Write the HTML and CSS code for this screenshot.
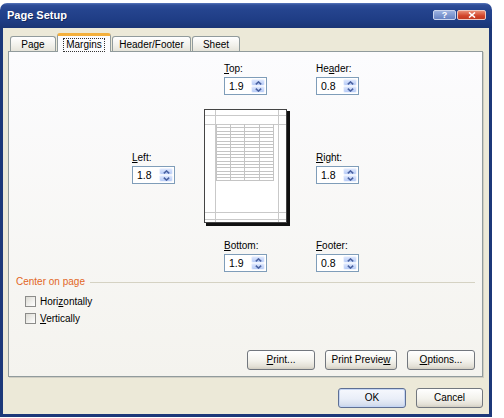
FILE: index.html
```html
<!DOCTYPE html>
<html>
<head>
<meta charset="utf-8">
<title>Page Setup</title>
<link rel="stylesheet" href="styles.css">
</head>
<body>
<div class="window">
  <div class="titlebar">
    <span class="title">Page Setup</span>
    <div class="tb-buttons">
      <span class="tb-btn help">?</span>
      <span class="tb-btn close"><svg width="8" height="6" viewBox="0 0 8 6"><path d="M1 0.5L7 5.5M7 0.5L1 5.5" stroke="#fff" stroke-width="1.6" fill="none"/></svg></span>
    </div>
  </div>
  <div class="frame">
    <div class="tabs">
      <div class="tab w-page">Page</div>
      <div class="tab active w-margins"><span class="focus">Margins</span></div>
      <div class="tab w-hf">Header/Footer</div>
      <div class="tab w-sheet">Sheet</div>
    </div>
    <div class="pane">
      <div class="mgrid">
        <div class="field f-top">
          <div class="lbl"><u>T</u>op:</div>
          <div class="spin"><span class="val">1.9</span><span class="arrows"><span class="arr"><svg width="7" height="4" viewBox="0 0 7 4"><path d="M0.8 3.4L3.5 0.9L6.2 3.4" stroke="#4A62A2" stroke-width="1.5" fill="none"/></svg></span><span class="arr"><svg width="7" height="4" viewBox="0 0 7 4"><path d="M0.8 0.6L3.5 3.1L6.2 0.6" stroke="#4A62A2" stroke-width="1.5" fill="none"/></svg></span></span></div>
        </div>
        <div class="field f-header">
          <div class="lbl">He<u>a</u>der:</div>
          <div class="spin"><span class="val">0.8</span><span class="arrows"><span class="arr"><svg width="7" height="4" viewBox="0 0 7 4"><path d="M0.8 3.4L3.5 0.9L6.2 3.4" stroke="#4A62A2" stroke-width="1.5" fill="none"/></svg></span><span class="arr"><svg width="7" height="4" viewBox="0 0 7 4"><path d="M0.8 0.6L3.5 3.1L6.2 0.6" stroke="#4A62A2" stroke-width="1.5" fill="none"/></svg></span></span></div>
        </div>
        <div class="field f-left">
          <div class="lbl"><u>L</u>eft:</div>
          <div class="spin"><span class="val">1.8</span><span class="arrows"><span class="arr"><svg width="7" height="4" viewBox="0 0 7 4"><path d="M0.8 3.4L3.5 0.9L6.2 3.4" stroke="#4A62A2" stroke-width="1.5" fill="none"/></svg></span><span class="arr"><svg width="7" height="4" viewBox="0 0 7 4"><path d="M0.8 0.6L3.5 3.1L6.2 0.6" stroke="#4A62A2" stroke-width="1.5" fill="none"/></svg></span></span></div>
        </div>
        <div class="preview">
          <svg width="86" height="117" viewBox="0 0 86 117" shape-rendering="crispEdges">
            <rect x="2" y="2" width="84" height="115" fill="#111"/>
            <rect x="0.5" y="0.5" width="82" height="113" fill="#fff" stroke="#444"/>
            <path d="M1 6.5H82M1 15.5H82M1 103.5H82M1 110.5H82M11.5 1V113M74.5 1V113" stroke="#C9C9C9" fill="none"/>
            <path d="M12 18.5H69M12 22.5H69M12 25.5H69M12 28.5H69M12 32.5H69M12 35.5H69M12 38.5H69M12 42.5H69M12 45.5H69M12 48.5H69M12 52.5H69M12 55.5H69M12 58.5H69M12 62.5H69M12 65.5H69M12 68.5H69M12 71.5H69M12.5 15V72M26.5 15V72M40.5 15V72M55.5 15V72M69.5 15V72" stroke="#C4C4C4" fill="none"/>
          </svg>
        </div>
        <div class="field f-right">
          <div class="lbl"><u>R</u>ight:</div>
          <div class="spin"><span class="val">1.8</span><span class="arrows"><span class="arr"><svg width="7" height="4" viewBox="0 0 7 4"><path d="M0.8 3.4L3.5 0.9L6.2 3.4" stroke="#4A62A2" stroke-width="1.5" fill="none"/></svg></span><span class="arr"><svg width="7" height="4" viewBox="0 0 7 4"><path d="M0.8 0.6L3.5 3.1L6.2 0.6" stroke="#4A62A2" stroke-width="1.5" fill="none"/></svg></span></span></div>
        </div>
        <div class="field f-bottom">
          <div class="lbl"><u>B</u>ottom:</div>
          <div class="spin"><span class="val">1.9</span><span class="arrows"><span class="arr"><svg width="7" height="4" viewBox="0 0 7 4"><path d="M0.8 3.4L3.5 0.9L6.2 3.4" stroke="#4A62A2" stroke-width="1.5" fill="none"/></svg></span><span class="arr"><svg width="7" height="4" viewBox="0 0 7 4"><path d="M0.8 0.6L3.5 3.1L6.2 0.6" stroke="#4A62A2" stroke-width="1.5" fill="none"/></svg></span></span></div>
        </div>
        <div class="field f-footer">
          <div class="lbl"><u>F</u>ooter:</div>
          <div class="spin"><span class="val">0.8</span><span class="arrows"><span class="arr"><svg width="7" height="4" viewBox="0 0 7 4"><path d="M0.8 3.4L3.5 0.9L6.2 3.4" stroke="#4A62A2" stroke-width="1.5" fill="none"/></svg></span><span class="arr"><svg width="7" height="4" viewBox="0 0 7 4"><path d="M0.8 0.6L3.5 3.1L6.2 0.6" stroke="#4A62A2" stroke-width="1.5" fill="none"/></svg></span></span></div>
        </div>
      </div>
      <div class="group-title"><span class="gt-text">Center on page</span><span class="gt-rule"></span></div>
      <div class="check first"><span class="box"></span><span>Hori<u>z</u>ontally</span></div>
      <div class="check"><span class="box"></span><span><u>V</u>ertically</span></div>
      <div class="pane-buttons">
        <div class="btn w-print"><u>P</u>rint...</div>
        <div class="btn w-preview">Print Previe<u>w</u></div>
        <div class="btn w-options"><u>O</u>ptions...</div>
      </div>
    </div>
    <div class="dlg-buttons">
      <div class="btn default w-ok">OK</div>
      <div class="btn w-cancel">Cancel</div>
    </div>
  </div>
</div>
</body>
</html>
```

FILE: styles.css
```css
* { box-sizing: border-box; }
html, body { margin: 0; padding: 0; }
body {
  width: 504px;
  height: 418px;
  overflow: hidden;
  background: #ffffff;
  font-family: "Liberation Sans", Arial, sans-serif;
  font-size: 10px;
  color: #000;
}
u { text-decoration: underline; text-underline-offset: 1px; }

.window {
  margin-top: 3px;
  width: 492px;
}

.titlebar {
  height: 25px;
  border-radius: 7px 7px 0 0;
  background: linear-gradient(#5A78BC 0px, #2F4E98 2px, #25448E 7px, #1F3D85 17px, #1A3575 25px);
  display: flex;
  align-items: center;
  padding: 0 6px 0 7px;
}
.title {
  color: #fff;
  font-weight: bold;
  font-size: 11px;
  line-height: 13px;
  text-shadow: 1px 1px 0 #12285E;
}
.tb-buttons {
  margin-left: auto;
  display: flex;
  gap: 1px;
  margin-top: -2px;
}
.tb-btn {
  height: 10px;
  border-radius: 2px;
  display: flex;
  align-items: center;
  justify-content: center;
  color: #fff;
  font-weight: bold;
  font-size: 9px;
  line-height: 8px;
}
.help {
  width: 23px;
  background: linear-gradient(#9BB1E0, #6682C2);
  border: 1px solid #C9D4EE;
}
.close {
  width: 29px;
  background: linear-gradient(#E98D74, #D2452A 60%, #C23A20);
  border: 1px solid #EFC8BE;
}

.frame {
  height: 389px;
  border: 3px solid #1C3879;
  border-top: 0;
  background: #ECE9D8;
  padding: 5px 6px 0 5px;
}

.tabs {
  display: flex;
  align-items: flex-end;
  height: 18px;
  padding-left: 2px;
  position: relative;
  z-index: 2;
}
.tab {
  height: 15px;
  padding-top: 2px;
  line-height: 12px;
  text-align: center;
  background: linear-gradient(#FFFFFF, #F1F0EA 60%, #E6E4DA);
  border: 1px solid #919B9C;
  border-bottom: 0;
  border-radius: 3px 3px 0 0;
  margin-right: 1px;
}
.tab.active {
  height: 19px;
  margin-bottom: -1px;
  padding-top: 2px;
  background: #FCFCFE;
  border-top: 3px solid #F4B03C;
}
.focus {
  display: inline-block;
  border: 1px dotted #333;
  padding: 0 2px;
  line-height: 12px;
}
.w-page { width: 46px; }
.w-margins { width: 54px; }
.w-hf { width: 79px; }
.w-sheet { width: 48px; }

.pane {
  height: 326px;
  border: 1px solid #919B9C;
  background: linear-gradient(#FCFCFE, #F4F3EE);
  box-shadow: 1px 1px 0 #CFCDC2;
  display: flex;
  flex-direction: column;
  padding: 11px 7px 6px 0;
}

.mgrid {
  display: grid;
  grid-template-columns: 43px 29px 84px 28px 43px;
  grid-template-rows: 32px 14px 116px 15px 32px;
  padding-left: 123px;
}
.f-top { grid-column: 3; grid-row: 1; margin-left: 20px; }
.f-header { grid-column: 5; grid-row: 1; }
.f-left { grid-column: 1; grid-row: 3; margin-top: 43px; }
.preview { grid-column: 3 / span 2; grid-row: 3; }
.f-right { grid-column: 5; grid-row: 3; margin-top: 43px; }
.f-bottom { grid-column: 3; grid-row: 5; margin-left: 20px; }
.f-footer { grid-column: 5; grid-row: 5; }

.field { width: 43px; }
.lbl {
  height: 12px;
  line-height: 12px;
  margin-bottom: 2px;
  white-space: nowrap;
}
.spin {
  display: flex;
  width: 43px;
  height: 18px;
  border: 1px solid #7F9DB9;
  background: #fff;
}
.val {
  flex: 1;
  padding-left: 4px;
  line-height: 16px;
  font-size: 10.5px;
}
.arrows {
  width: 15px;
  display: flex;
  flex-direction: column;
  padding: 1px 1px 1px 0;
  gap: 0;
}
.arr {
  flex: 1;
  display: flex;
  align-items: center;
  justify-content: center;
  background: linear-gradient(#DCE6FD, #B7CBF6);
  border: 1px solid #EEF3FE;
  border-radius: 2px;
}
.preview svg { display: block; }

.group-title {
  display: flex;
  align-items: center;
  margin-top: 4px;
  height: 12px;
  line-height: 12px;
  padding-left: 7px;
}
.gt-text { color: #E2661F; }
.gt-rule {
  flex: 1;
  height: 1px;
  background: #D5D2C3;
  margin-left: 5px;
}

.check {
  display: flex;
  align-items: center;
  height: 13px;
  margin-top: 4px;
  margin-left: 16px;
}
.check.first { margin-top: 7px; }
.box {
  width: 11px;
  height: 11px;
  border: 1px solid #8C8C8A;
  background: linear-gradient(135deg, #DCDBD4, #FFFFFF);
  margin-right: 4px;
}

.pane-buttons {
  margin-top: auto;
  display: flex;
  justify-content: flex-end;
  gap: 10px;
}

.btn {
  height: 20px;
  line-height: 17px;
  padding-bottom: 1px;
  text-align: center;
  border: 1px solid #72777E;
  border-radius: 3px;
  background: linear-gradient(#FFFFFF, #F3F2EC 55%, #E4E1D7 85%, #D2CEC2);
  white-space: nowrap;
}
.btn.default {
  border-color: #5E6F94;
  background: linear-gradient(#F6F8FD, #E9EEF8 55%, #D8E0EF 85%, #C6D2EA);
  box-shadow: inset 0 0 0 1px #C4D5F4;
}
.w-print { width: 68px; }
.w-preview { width: 72px; }
.w-options { width: 68px; }

.dlg-buttons {
  display: flex;
  justify-content: flex-end;
  gap: 10px;
  margin-top: 11px;
}
.w-ok { width: 68px; }
.w-cancel { width: 67px; }
```
